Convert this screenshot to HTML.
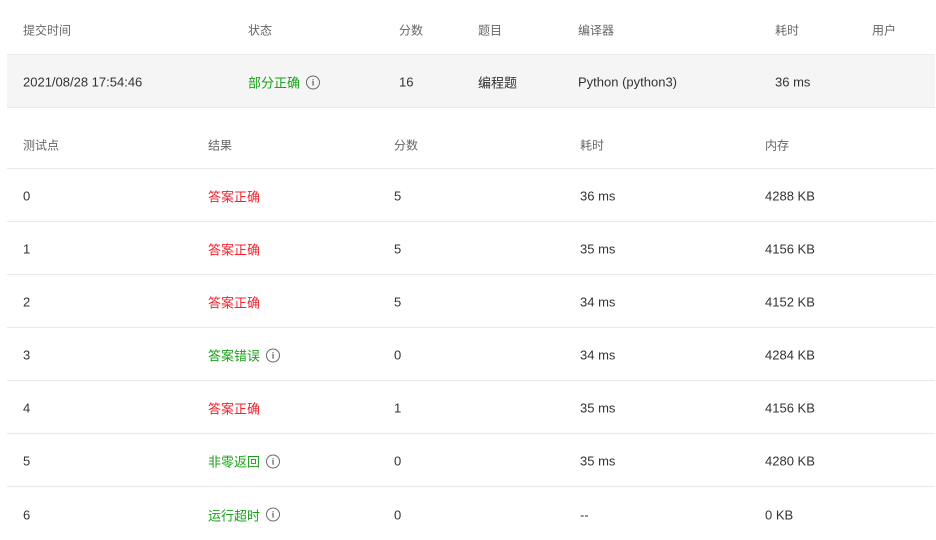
<!DOCTYPE html>
<html><head><meta charset="utf-8"><style>
body{margin:0;background:#fff;width:936px;height:537px;overflow:hidden;font-family:"Liberation Sans","Noto Sans CJK SC",sans-serif;font-size:13px;color:#333}
.row{position:absolute;left:7px;width:928px;border-bottom:1px solid #e8e8e8;box-sizing:border-box}
.row span{position:absolute;top:calc(50% + 1px);transform:translateY(-50%);white-space:nowrap;display:flex;align-items:center}
.h span{color:#666;font-size:12px}
.g{color:#19a119}.r{color:#f5222d}
.i{display:inline-flex;align-items:center;justify-content:center;width:14px;height:14px;border:1.5px solid #6a6a6a;border-radius:50%;box-sizing:border-box;margin-left:6px;color:#6a6a6a;font:bold 9px "Liberation Serif",serif;font-style:normal;line-height:1;padding-top:1px}
</style></head><body>
<div class="row h" style="top:2px;height:53px;border:0"><span style="left:16px">提交时间</span><span style="left:241px">状态</span><span style="left:392px">分数</span><span style="left:471px">题目</span><span style="left:571px">编译器</span><span style="left:768px">耗时</span><span style="left:865px">用户</span></div>
<div class="row" style="top:54px;height:54px;background:#f5f5f5;border-top:1px solid #ebebeb"><span style="left:16px">2021/08/28 17:54:46</span><span style="left:241px" class="g">部分正确<i class="i">i</i></span><span style="left:392px">16</span><span style="left:471px">编程题</span><span style="left:571px">Python (python3)</span><span style="left:768px">36 ms</span></div>
<div class="row h" style="top:120px;height:49px"><span style="left:16px">测试点</span><span style="left:201px">结果</span><span style="left:387px">分数</span><span style="left:573px">耗时</span><span style="left:758px">内存</span></div>
<div class="row" style="top:169px;height:53px"><span style="left:16px">0</span><span style="left:201px" class="r">答案正确</span><span style="left:387px">5</span><span style="left:573px">36 ms</span><span style="left:758px">4288 KB</span></div>
<div class="row" style="top:222px;height:53px"><span style="left:16px">1</span><span style="left:201px" class="r">答案正确</span><span style="left:387px">5</span><span style="left:573px">35 ms</span><span style="left:758px">4156 KB</span></div>
<div class="row" style="top:275px;height:53px"><span style="left:16px">2</span><span style="left:201px" class="r">答案正确</span><span style="left:387px">5</span><span style="left:573px">34 ms</span><span style="left:758px">4152 KB</span></div>
<div class="row" style="top:328px;height:53px"><span style="left:16px">3</span><span style="left:201px" class="g">答案错误<i class="i">i</i></span><span style="left:387px">0</span><span style="left:573px">34 ms</span><span style="left:758px">4284 KB</span></div>
<div class="row" style="top:381px;height:53px"><span style="left:16px">4</span><span style="left:201px" class="r">答案正确</span><span style="left:387px">1</span><span style="left:573px">35 ms</span><span style="left:758px">4156 KB</span></div>
<div class="row" style="top:434px;height:53px"><span style="left:16px">5</span><span style="left:201px" class="g">非零返回<i class="i">i</i></span><span style="left:387px">0</span><span style="left:573px">35 ms</span><span style="left:758px">4280 KB</span></div>
<div class="row" style="top:487px;height:53px;border:0"><span style="left:16px">6</span><span style="left:201px" class="g">运行超时<i class="i">i</i></span><span style="left:387px">0</span><span style="left:573px">--</span><span style="left:758px">0 KB</span></div>
</body></html>
